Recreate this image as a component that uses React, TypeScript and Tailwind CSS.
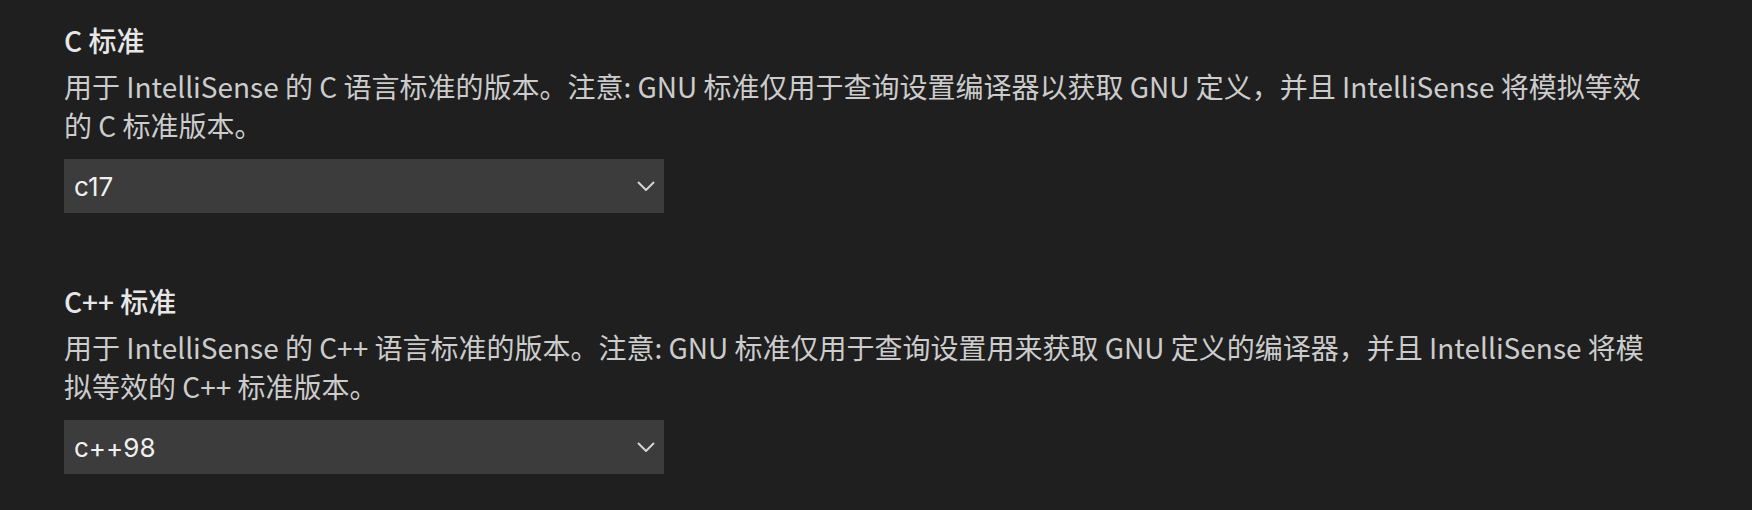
import React from 'react';

type Setting = {
  title: string;
  description: string;
  value: string;
};

const settings: Setting[] = [
  {
    title: 'C 标准',
    description:
      '用于 IntelliSense 的 C 语言标准的版本。注意: GNU 标准仅用于查询设置编译器以获取 GNU 定义，并且 IntelliSense 将模拟等效的 C 标准版本。',
    value: 'c17',
  },
  {
    title: 'C++ 标准',
    description:
      '用于 IntelliSense 的 C++ 语言标准的版本。注意: GNU 标准仅用于查询设置用来获取 GNU 定义的编译器，并且 IntelliSense 将模拟等效的 C++ 标准版本。',
    value: 'c++98',
  },
];

const Chevron = () => (
  <svg width="18" height="10" viewBox="0 0 18 10" fill="none">
    <path d="M1 1l8 8 8-8" stroke="#d4d4d4" strokeWidth="2" />
  </svg>
);

const SettingItem: React.FC<{ setting: Setting }> = ({ setting }) => (
  <div className="flex flex-col font-['Noto_Sans_CJK_SC',sans-serif]">
    <div className="h-[36px] leading-[36px] text-[28px] font-medium text-[#e7e7e7]">
      {setting.title}
    </div>
    <div className="mt-[9px] w-[1592px] text-[28px] leading-[39px] text-[#cccccc]">
      {setting.description}
    </div>
    {/* dropdown */}
    <div className="mt-[14px] flex h-[54px] w-[600px] items-center justify-between bg-[#3c3c3c] pl-[10px] pr-[9px] font-['Inter',sans-serif]">
      <span className="text-[26px] text-[#f0f0f0]">{setting.value}</span>
      <Chevron />
    </div>
  </div>
);

export default function App() {
  return (
    <div className="min-h-[510px] w-full bg-[#1f1f1f] pl-[64px] pt-[22px]">
      <div className="flex flex-col gap-[70px]">
        {settings.map((s) => (
          <SettingItem key={s.title} setting={s} />
        ))}
      </div>
    </div>
  );
}
